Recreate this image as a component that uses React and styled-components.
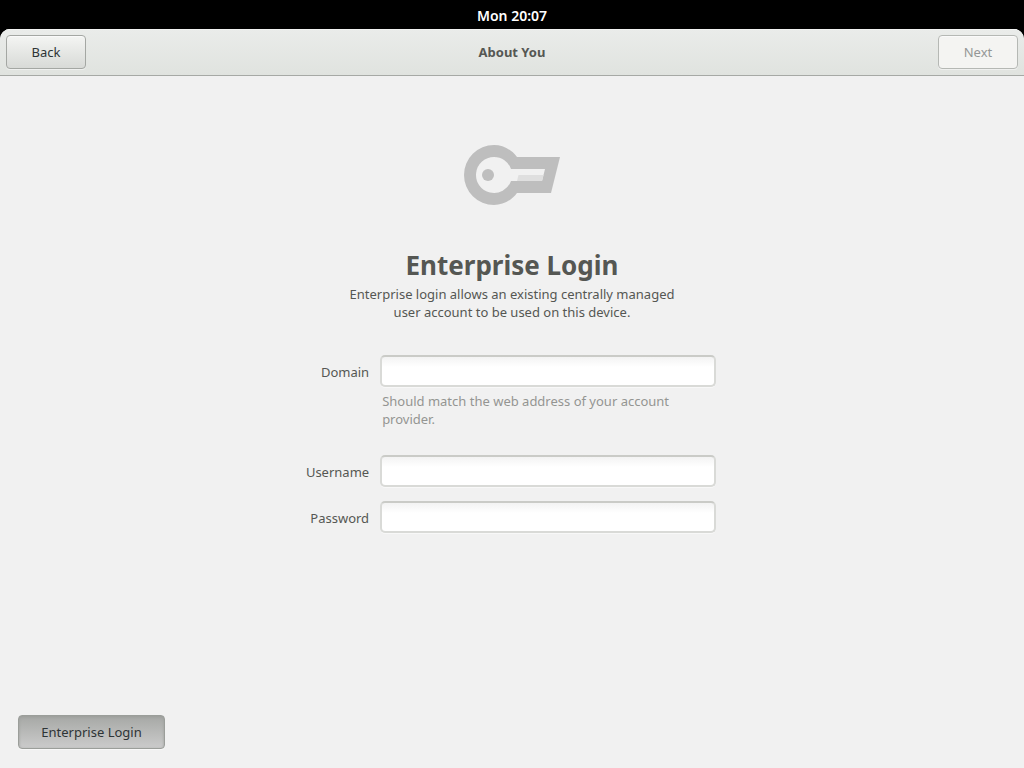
import React from "react";
import styled, { createGlobalStyle } from "styled-components";

const GlobalStyle = createGlobalStyle`
  *, *::before, *::after { box-sizing: border-box; }
  body {
    margin: 0;
    background: #000;
    color: #555753;
    font: 13px/18px "Noto Sans", "Open Sans", sans-serif;
  }
`;

const Screen = styled.div`
  min-height: 100vh;
  display: flex;
  flex-direction: column;
`;

const TopBar = styled.header`
  height: 29px;
  padding-top: 2px;
  display: flex;
  align-items: center;
  justify-content: center;
  background: #000;
  color: #fff;
  font-size: 14px;
  font-weight: 600;
`;

const Assistant = styled.div`
  flex: 1;
  display: flex;
  flex-direction: column;
  background: #f1f1f1;
  border-radius: 10px 10px 0 0;
  overflow: hidden;
`;

const HeaderBar = styled.nav`
  height: 47px;
  padding: 0 6px;
  display: grid;
  grid-template-columns: 1fr auto 1fr;
  align-items: center;
  background: linear-gradient(#eaecea, #e0e3df);
  border-bottom: 1px solid #a6a9a5;
  box-shadow: inset 0 1px #f2f3f2;
`;

const HeaderTitle = styled.h1`
  margin: 0;
  font-size: 13px;
  line-height: 18px;
  font-weight: 700;
`;

const Button = styled.button`
  width: 80px;
  height: 34px;
  padding: 0;
  border: 1px solid #a4a7a3;
  border-radius: 4px;
  background: linear-gradient(#f4f5f3, #d8dad7);
  box-shadow: inset 0 1px #fafafa, 0 1px #eff0ef;
  color: #2e3436;
  font: inherit;
  justify-self: ${(p) => (p.$end ? "end" : "start")};

  &:disabled {
    border-color: #b5b8b4;
    background: #f4f4f2;
    color: #949796;
  }
`;

const ToggleButton = styled(Button)`
  width: 147px;
  border-color: #9b9e9a;
  background: linear-gradient(#a6a8a5, #cbcbcb);
  box-shadow: inset 0 1px 3px #9b9d9a, 0 1px #f8f8f8;
`;

const Page = styled.main`
  flex: 1;
  padding: 69px 18px 19px;
  display: flex;
  flex-direction: column;
  align-items: center;
`;

const KeyIcon = styled.svg`
  width: 96px;
  height: 60px;
  display: block;
`;

const Title = styled.h2`
  margin: 40px 0 0;
  font-size: 26px;
  line-height: 40px;
  font-weight: 700;
`;

const Intro = styled.p`
  margin: 0;
  max-width: 350px;
  text-align: center;
`;

const Form = styled.form`
  margin: 34px 2px 0 0;
  display: grid;
  grid-template-columns: auto 336px;
  column-gap: 11px;
  align-items: center;
`;

const Label = styled.label`
  padding-top: 2px;
  text-align: right;
`;

const Entry = styled.input`
  width: 100%;
  height: 32px;
  padding: 0 8px;
  border: 2px solid #d9dad7;
  border-top-color: #cacbc7;
  border-radius: 5px;
  outline: none;
  background: linear-gradient(#f3f3f3, #fff 10px);
  background-clip: padding-box;
  box-shadow: 0 1px #f8f8f8;
  color: #2e3436;
  font: inherit;
`;

const Hint = styled.p`
  grid-column: 2;
  margin: 5px 2px 27px;
  max-width: 310px;
  color: #949592;
`;

const Spacer = styled.div`
  grid-column: 1 / -1;
  height: 14px;
`;

const Footer = styled.footer`
  align-self: stretch;
  margin-top: auto;
  display: flex;
`;

export default function App() {
  return (
    <Screen>
      <GlobalStyle />
      <TopBar>
        <time>Mon 20:07</time>
      </TopBar>
      <Assistant>
        <HeaderBar>
          <Button type="button">Back</Button>
          <HeaderTitle>About You</HeaderTitle>
          <Button type="button" $end disabled>Next</Button>
        </HeaderBar>
        <Page>
          <KeyIcon viewBox="0 0 96 60" aria-hidden="true">
            <path
              fill="#bebebe"
              fillRule="evenodd"
              d="M30 0C39 0 47.500 4.500 53 12H96L87 48H53C47.500 55.500 39 60 30 60A30 30 0 0 1 30 0ZM30 12A18 18 0 1 0 47 36H78L81 24H47A18 18 0 0 0 30 12Z"
            />
            <path fill="#dfdfdf" d="M54.500 30H79.500L78 36H53Z" />
            <circle cx="24" cy="30" r="6" fill="#bebebe" />
          </KeyIcon>
          <Title>Enterprise Login</Title>
          <Intro>
            Enterprise login allows an existing centrally managed user account to be used on this device.
          </Intro>
          <Form>
            <Label htmlFor="domain">Domain</Label>
            <Entry id="domain" type="text" aria-describedby="domain-hint" />
            <Hint id="domain-hint">Should match the web address of your account provider.</Hint>
            <Label htmlFor="username">Username</Label>
            <Entry id="username" type="text" />
            <Spacer />
            <Label htmlFor="password">Password</Label>
            <Entry id="password" type="password" />
          </Form>
          <Footer>
            <ToggleButton type="button" aria-pressed="true">Enterprise Login</ToggleButton>
          </Footer>
        </Page>
      </Assistant>
    </Screen>
  );
}
